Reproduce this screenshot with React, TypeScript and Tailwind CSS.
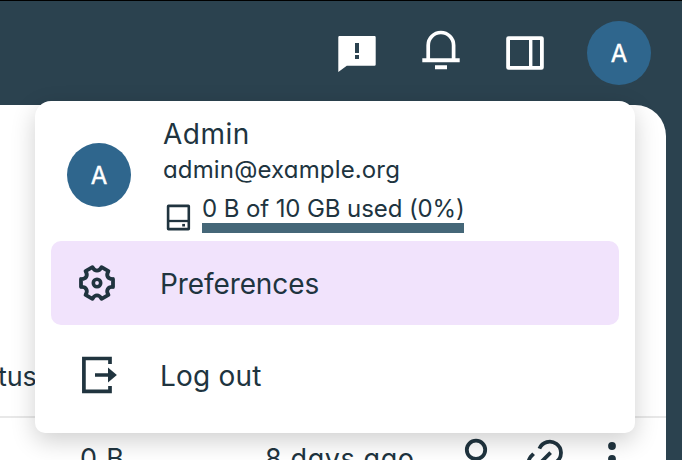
import type { ReactNode } from 'react';

const gearPath = (() => {
  const at = (deg: number, r: number) => {
    const a = (deg * Math.PI) / 180;
    return `${(20 + r * Math.cos(a)).toFixed(2)} ${(20 + r * Math.sin(a)).toFixed(2)}`;
  };
  let d = `M${at(-14, 16.5)}`;
  for (let k = 0; k < 6; k++) {
    const c = k * 60;
    d += ` L${at(c + 14, 16.5)} C${at(c + 19, 11.4)} ${at(c + 41, 11.4)} ${at(c + 46, 16.5)}`;
  }
  return d + 'Z';
})();

function Avatar() {
  return (
    <div className="flex size-16 shrink-0 items-center justify-center rounded-full bg-[#2f668d] text-[24px] font-normal leading-none text-white">
      <span className="pt-px [-webkit-text-stroke:0.4px_white]">A</span>
    </div>
  );
}

function MenuItem({ icon, active, children }: { icon: ReactNode; active?: boolean; children: ReactNode }) {
  return (
    <button className={`flex h-[84px] w-full items-center rounded-[10px] pl-[26px] text-left ${active ? 'bg-[#f1e3fc]' : ''}`}>
      {icon}
      {children}
    </button>
  );
}

function Header() {
  return (
    <header className="flex h-[105px] items-start border-t border-black pl-[336px] pt-5">
      <svg className="mt-[11px] h-[44px] w-[42px]" viewBox="336 32 42 44" fill="#fff">
        <path fillRule="evenodd" d="M339.5 36H374.5Q375.7 36 375.7 37.2V64.5Q375.7 65.7 374.5 65.7H346.8L338.3 72V37.2Q338.3 36 339.5 36ZM355 43V53H359V43ZM355 55V59H359V55Z" />
      </svg>
      <svg className="ml-[42px] mt-[7px] h-[44px] w-[42px]" viewBox="420 28 42 44" fill="none" stroke="#fff" strokeWidth="3.7">
        <path d="M428.2 60V45.2A12.7 12.7 0 0 1 453.6 45.2V60" />
        <path d="M422.3 60.2H459.7M435 67.3H447" strokeWidth="4" />
      </svg>
      <svg className="ml-[42px] mt-[11px] h-[42px] w-[42px]" viewBox="504 32 42 42" fill="none" stroke="#fff" strokeWidth="3.8">
        <rect x="508.1" y="38.1" width="33.8" height="29.8" rx=".5" />
        <path d="M530.7 38V68" strokeWidth="3.4" />
      </svg>
      <div className="ml-[41px]"><Avatar /></div>
    </header>
  );
}

function FileList() {
  return (
    <main className="h-[355px] w-[666px] overflow-hidden rounded-tr-[31px] bg-white text-[27px] leading-8">
      <div className="flex h-[313px] items-end border-b-2 border-[#e8e8e8] pb-[23px]">
        <span className="-ml-[2px] tracking-[-0.1px]">tus</span>
      </div>
      <div className="flex items-start pl-[80px] pt-[25px]">
        <span className="w-[185px] whitespace-nowrap tracking-[0.8px]">0 B</span>
        <span className="w-[195px] whitespace-nowrap tracking-[0.6px]">8 days ago</span>
        <svg className="-mt-[7px] h-[40px] w-[180px]" viewBox="460 436 180 40" fill="none" stroke="#20343f" strokeWidth="3.8">
          <circle cx="476" cy="449.8" r="9.2" />
          <path d="M539.4 448.6A11.2 11.2 0 1 1 557 461.4M550.6 452.6L539.5 463.7M533.6 453.8L530.5 457A11.2 11.2 0 0 0 530.5 470" />
          <g fill="#20343f" stroke="none"><circle cx="612" cy="446" r="3.9" /><circle cx="612" cy="458.8" r="3.9" /></g>
        </svg>
      </div>
    </main>
  );
}

function AccountMenu() {
  return (
    <div className="absolute left-[35px] top-[101px] h-[332px] w-[600px] rounded-b-[10px] rounded-t-[16px] bg-white px-4 shadow-[0_8px_24px_rgba(0,0,0,0.19)]">
      <div className="flex h-[140px] pl-4">
        <div className="pt-[42px]"><Avatar /></div>
        <div className="ml-8 whitespace-nowrap pt-[17px]">
          <div className="h-[34px] text-[28px] leading-[33px] tracking-[0.5px]">Admin</div>
          <div className="h-[36px] text-[24px] leading-[36px] tracking-[0.15px]">admin@example.org</div>
          <div className="flex h-[45px] pt-1">
            <svg className="ml-[2px] mt-[11px] h-[28px] w-[27px]" viewBox="165 203 27 28" fill="none" stroke="#20343f" strokeWidth="2.6">
              <rect x="168.1" y="205.9" width="20.7" height="23.2" rx=".4" />
              <path d="M168 221H189" strokeWidth="2.3" />
              <path d="M182.2 225.2H185" />
            </svg>
            <div className="ml-[10px] w-[262px]">
              <div className="h-[31px] text-[24px] leading-[34px] tracking-[-0.1px]">0 B of 10 GB used (0%)</div>
              <div className="h-[10px] bg-[#456778]" />
            </div>
          </div>
        </div>
      </div>
      <nav className="flex flex-col gap-2 text-[28px]">
        <MenuItem active icon={
          <svg className="mr-[42px] size-10" viewBox="0 0 40 40" fill="none" stroke="#20343f" strokeWidth="3.8" strokeLinejoin="round">
            <path d={gearPath} /><circle cx="20" cy="20" r="3.7" strokeWidth="3.6" />
          </svg>
        }><span className="pl-px pt-px tracking-[-0.1px]">Preferences</span></MenuItem>
        <MenuItem icon={
          <svg className="mr-[42px] size-10" viewBox="77 355 40 40" fill="none" stroke="#20343f" strokeWidth="3.7">
            <path d="M110 364V358.5H83.9V391.3H110V386M95 375H109" />
            <path d="M108 367.5L116.9 375L108 382.5Z" fill="#20343f" stroke="none" />
          </svg>
        }><span className="pl-px pt-px tracking-[0.2px]">Log out</span></MenuItem>
      </nav>
    </div>
  );
}

export default function App() {
  return (
    <div className="relative h-[460px] w-[682px] overflow-hidden bg-[#2b424f] font-['Inter','Lato',sans-serif] text-[#20343f] [font-feature-settings:'cv11'_1]">
      <Header />
      <FileList />
      <AccountMenu />
    </div>
  );
}
